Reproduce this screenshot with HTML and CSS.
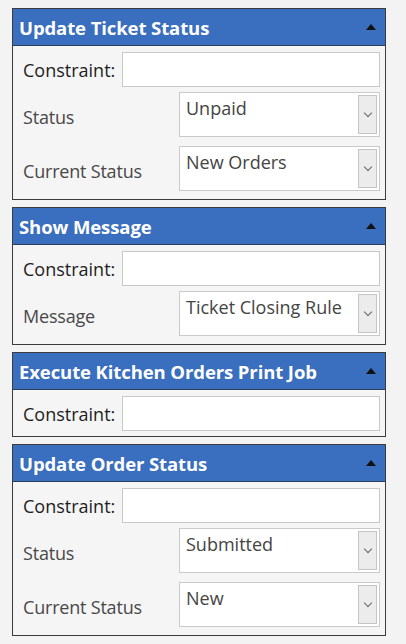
FILE: index.html
```html
<!DOCTYPE html>
<html>
<head>
<meta charset="utf-8">
<title>Rule Actions</title>
<link rel="stylesheet" href="styles.css">
</head>
<body>
<div class="actions">
  <div class="panel">
    <div class="panel-head"><span>Update Ticket Status</span><i class="caret"></i></div>
    <div class="panel-body">
      <div class="row-constraint"><label>Constraint:</label><div class="textbox"></div></div>
      <div class="row-select"><label>Status</label><div class="combo"><span>Unpaid</span><b class="drop"></b></div></div>
      <div class="row-select"><label>Current Status</label><div class="combo"><span>New Orders</span><b class="drop"></b></div></div>
    </div>
  </div>
  <div class="panel">
    <div class="panel-head"><span>Show Message</span><i class="caret"></i></div>
    <div class="panel-body">
      <div class="row-constraint"><label>Constraint:</label><div class="textbox"></div></div>
      <div class="row-select"><label>Message</label><div class="combo"><span>Ticket Closing Rule</span><b class="drop"></b></div></div>
    </div>
  </div>
  <div class="panel">
    <div class="panel-head"><span>Execute Kitchen Orders Print Job</span><i class="caret"></i></div>
    <div class="panel-body">
      <div class="row-constraint"><label>Constraint:</label><div class="textbox"></div></div>
    </div>
  </div>
  <div class="panel">
    <div class="panel-head"><span>Update Order Status</span><i class="caret"></i></div>
    <div class="panel-body">
      <div class="row-constraint"><label>Constraint:</label><div class="textbox"></div></div>
      <div class="row-select"><label>Status</label><div class="combo"><span>Submitted</span><b class="drop"></b></div></div>
      <div class="row-select"><label>Current Status</label><div class="combo"><span>New</span><b class="drop"></b></div></div>
    </div>
  </div>
</div>
</body>
</html>
```
FILE: styles.css
```css
body{ margin:0; background:#f3f3f3; font-family:"Open Sans","Noto Sans",sans-serif; color:#333; }
.actions{ width:374px; margin:8px 0 0 12px; display:flex; flex-direction:column; gap:7px; }
.panel{ border:1px solid #3c3c3c; background:#f5f5f5; }
.panel-head{ height:36px; background:#3a6ebe; border-bottom:1px solid #2c3e5c; color:#fff; font-weight:bold; font-size:18.5px; display:flex; align-items:center; justify-content:space-between; padding:0 8px 0 6px; letter-spacing:-0.1px; }
.caret{ width:0; height:0; border-left:5px solid transparent; border-right:5px solid transparent; border-bottom:6px solid #111; margin-right:1px; }
.panel-body{ padding:6px 5px 5px 10px; display:flex; flex-direction:column; }
.row-constraint{ display:flex; align-items:center; height:35px; }
.row-constraint label{ font-size:18px; color:#1e1e1e; width:99px; white-space:nowrap; }
.textbox{ flex:1; height:33px; background:#fff; border:1px solid #c8c8c8; }
.row-select{ display:flex; align-items:center; height:45px; margin:5px 0 3px; }
.row-select + .row-select{ margin-top:6px; }
.row-select label{ font-size:18px; color:#484848; width:156px; padding-top:5px; letter-spacing:-0.2px; white-space:nowrap; }
.combo{ flex:1; background:#fff; border:1px solid #cacaca; display:flex; justify-content:space-between; padding:2px 2px 2px 6px; box-sizing:border-box; height:45px; }
.combo span{ font-size:18px; color:#444; line-height:22px; padding-top:2px; white-space:nowrap; }
.drop{ width:17px; border:1px solid #c4c4c4; background:#ececec; display:flex; align-items:center; justify-content:center; }
.drop::after{ content:""; width:5px; height:5px; border-right:1.5px solid #666; border-bottom:1.5px solid #666; transform:rotate(45deg); margin-top:-3px; }
```
